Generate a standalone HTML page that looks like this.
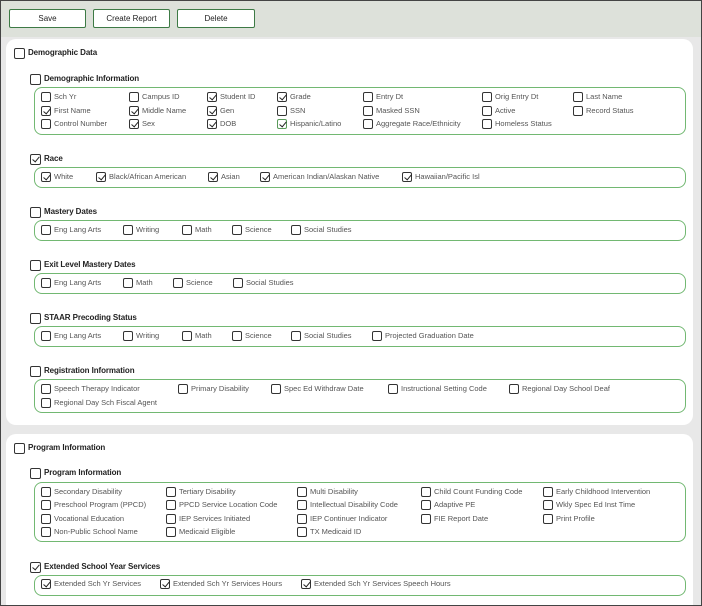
<!DOCTYPE html><html><head><style>
body{margin:0;width:702px;height:606px;overflow:hidden;font-family:"Liberation Sans",sans-serif;}
#f{position:absolute;left:0;top:0;width:700px;height:604px;border:1px solid #444;background:#e8e8e8;overflow:hidden}
#top{position:absolute;left:0;top:0;width:700px;height:36px;background:#dde1da}
.btn{position:absolute;top:8px;height:17px;border:1px solid #3d7a45;border-radius:2px;background:#fff;font-size:8px;line-height:17px;text-align:center;color:#222}
.p{position:absolute;left:5px;width:687px;background:#fff;border-radius:10px}
.g{position:absolute;left:33px;width:652px;border:1.5px solid #72b872;border-radius:8px;box-sizing:border-box}
.i,.h{position:absolute;font-size:7.5px;line-height:10px;color:#555;white-space:nowrap}
.h{font-size:8px;color:#222;font-weight:bold;letter-spacing:-0.1px}
.k{display:inline-block;width:8px;height:8px;border:1px solid #333;border-radius:2px;vertical-align:top;margin-right:3px;position:relative;box-sizing:content-box;background:#fff}
.h .k{width:9px;height:9px}
.x::after{content:"";position:absolute;left:2.5px;top:0px;width:3px;height:6px;border:solid #222;border-width:0 1.2px 1.2px 0;transform:rotate(40deg)}
.gr{border-color:#5a9a5a}
</style></head><body><div id="f">
<div id="top"></div>
<div class="btn" style="left:8px;width:75px">Save</div>
<div class="btn" style="left:92px;width:75px">Create Report</div>
<div class="btn" style="left:176px;width:76px">Delete</div>
<div class="p" style="top:38px;height:386px"></div>
<div class="p" style="top:433px;height:180px"></div>

<div class="h" style="left:13px;top:47px"><b class="k"></b>Demographic Data</div>
<div class="h" style="left:29px;top:73px"><b class="k"></b>Demographic Information</div>
<div class="g" style="top:86px;height:48px"></div>
<div class="i" style="left:40px;top:91px"><b class="k"></b>Sch Yr</div>
<div class="i" style="left:128px;top:91px"><b class="k"></b>Campus ID</div>
<div class="i" style="left:206px;top:91px"><b class="k x"></b>Student ID</div>
<div class="i" style="left:276px;top:91px"><b class="k x"></b>Grade</div>
<div class="i" style="left:362px;top:91px"><b class="k"></b>Entry Dt</div>
<div class="i" style="left:481px;top:91px"><b class="k"></b>Orig Entry Dt</div>
<div class="i" style="left:572px;top:91px"><b class="k"></b>Last Name</div>
<div class="i" style="left:40px;top:105px"><b class="k x"></b>First Name</div>
<div class="i" style="left:128px;top:105px"><b class="k x"></b>Middle Name</div>
<div class="i" style="left:206px;top:105px"><b class="k x"></b>Gen</div>
<div class="i" style="left:276px;top:105px"><b class="k"></b>SSN</div>
<div class="i" style="left:362px;top:105px"><b class="k"></b>Masked SSN</div>
<div class="i" style="left:481px;top:105px"><b class="k"></b>Active</div>
<div class="i" style="left:572px;top:105px"><b class="k"></b>Record Status</div>
<div class="i" style="left:40px;top:118px"><b class="k"></b>Control Number</div>
<div class="i" style="left:128px;top:118px"><b class="k x"></b>Sex</div>
<div class="i" style="left:206px;top:118px"><b class="k x"></b>DOB</div>
<div class="i" style="left:276px;top:118px"><b class="k x gr"></b>Hispanic/Latino</div>
<div class="i" style="left:362px;top:118px"><b class="k"></b>Aggregate Race/Ethnicity</div>
<div class="i" style="left:481px;top:118px"><b class="k"></b>Homeless Status</div>

<div class="h" style="left:29px;top:153px"><b class="k x"></b>Race</div>
<div class="g" style="top:166px;height:21px"></div>
<div class="i" style="left:40px;top:171px"><b class="k x"></b>White</div>
<div class="i" style="left:95px;top:171px"><b class="k x"></b>Black/African American</div>
<div class="i" style="left:207px;top:171px"><b class="k x"></b>Asian</div>
<div class="i" style="left:259px;top:171px"><b class="k x"></b>American Indian/Alaskan Native</div>
<div class="i" style="left:401px;top:171px"><b class="k x"></b>Hawaiian/Pacific Isl</div>

<div class="h" style="left:29px;top:206px"><b class="k"></b>Mastery Dates</div>
<div class="g" style="top:219px;height:21px"></div>
<div class="i" style="left:40px;top:224px"><b class="k"></b>Eng Lang Arts</div>
<div class="i" style="left:122px;top:224px"><b class="k"></b>Writing</div>
<div class="i" style="left:181px;top:224px"><b class="k"></b>Math</div>
<div class="i" style="left:231px;top:224px"><b class="k"></b>Science</div>
<div class="i" style="left:290px;top:224px"><b class="k"></b>Social Studies</div>

<div class="h" style="left:29px;top:259px"><b class="k"></b>Exit Level Mastery Dates</div>
<div class="g" style="top:272px;height:21px"></div>
<div class="i" style="left:40px;top:277px"><b class="k"></b>Eng Lang Arts</div>
<div class="i" style="left:122px;top:277px"><b class="k"></b>Math</div>
<div class="i" style="left:172px;top:277px"><b class="k"></b>Science</div>
<div class="i" style="left:232px;top:277px"><b class="k"></b>Social Studies</div>

<div class="h" style="left:29px;top:312px"><b class="k"></b>STAAR Precoding Status</div>
<div class="g" style="top:325px;height:21px"></div>
<div class="i" style="left:40px;top:330px"><b class="k"></b>Eng Lang Arts</div>
<div class="i" style="left:122px;top:330px"><b class="k"></b>Writing</div>
<div class="i" style="left:181px;top:330px"><b class="k"></b>Math</div>
<div class="i" style="left:231px;top:330px"><b class="k"></b>Science</div>
<div class="i" style="left:290px;top:330px"><b class="k"></b>Social Studies</div>
<div class="i" style="left:371px;top:330px"><b class="k"></b>Projected Graduation Date</div>

<div class="h" style="left:29px;top:365px"><b class="k"></b>Registration Information</div>
<div class="g" style="top:378px;height:34px"></div>
<div class="i" style="left:40px;top:383px"><b class="k"></b>Speech Therapy Indicator</div>
<div class="i" style="left:177px;top:383px"><b class="k"></b>Primary Disability</div>
<div class="i" style="left:270px;top:383px"><b class="k"></b>Spec Ed Withdraw Date</div>
<div class="i" style="left:387px;top:383px"><b class="k"></b>Instructional Setting Code</div>
<div class="i" style="left:508px;top:383px"><b class="k"></b>Regional Day School Deaf</div>
<div class="i" style="left:40px;top:397px"><b class="k"></b>Regional Day Sch Fiscal Agent</div>

<div class="h" style="left:13px;top:442px"><b class="k"></b>Program Information</div>
<div class="h" style="left:29px;top:467px"><b class="k"></b>Program Information</div>
<div class="g" style="top:481px;height:60px"></div>
<div class="i" style="left:40px;top:486px"><b class="k"></b>Secondary Disability</div>
<div class="i" style="left:165px;top:486px"><b class="k"></b>Tertiary Disability</div>
<div class="i" style="left:296px;top:486px"><b class="k"></b>Multi Disability</div>
<div class="i" style="left:420px;top:486px"><b class="k"></b>Child Count Funding Code</div>
<div class="i" style="left:542px;top:486px"><b class="k"></b>Early Childhood Intervention</div>
<div class="i" style="left:40px;top:499px"><b class="k"></b>Preschool Program (PPCD)</div>
<div class="i" style="left:165px;top:499px"><b class="k"></b>PPCD Service Location Code</div>
<div class="i" style="left:296px;top:499px"><b class="k"></b>Intellectual Disability Code</div>
<div class="i" style="left:420px;top:499px"><b class="k"></b>Adaptive PE</div>
<div class="i" style="left:542px;top:499px"><b class="k"></b>Wkly Spec Ed Inst Time</div>
<div class="i" style="left:40px;top:513px"><b class="k"></b>Vocational Education</div>
<div class="i" style="left:165px;top:513px"><b class="k"></b>IEP Services Initiated</div>
<div class="i" style="left:296px;top:513px"><b class="k"></b>IEP Continuer Indicator</div>
<div class="i" style="left:420px;top:513px"><b class="k"></b>FIE Report Date</div>
<div class="i" style="left:542px;top:513px"><b class="k"></b>Print Profile</div>
<div class="i" style="left:40px;top:526px"><b class="k"></b>Non-Public School Name</div>
<div class="i" style="left:165px;top:526px"><b class="k"></b>Medicaid Eligible</div>
<div class="i" style="left:296px;top:526px"><b class="k"></b>TX Medicaid ID</div>

<div class="h" style="left:29px;top:561px"><b class="k x"></b>Extended School Year Services</div>
<div class="g" style="top:574px;height:21px"></div>
<div class="i" style="left:40px;top:578px"><b class="k x"></b>Extended Sch Yr Services</div>
<div class="i" style="left:159px;top:578px"><b class="k x"></b>Extended Sch Yr Services Hours</div>
<div class="i" style="left:300px;top:578px"><b class="k x"></b>Extended Sch Yr Services Speech Hours</div>
</div></body></html>
